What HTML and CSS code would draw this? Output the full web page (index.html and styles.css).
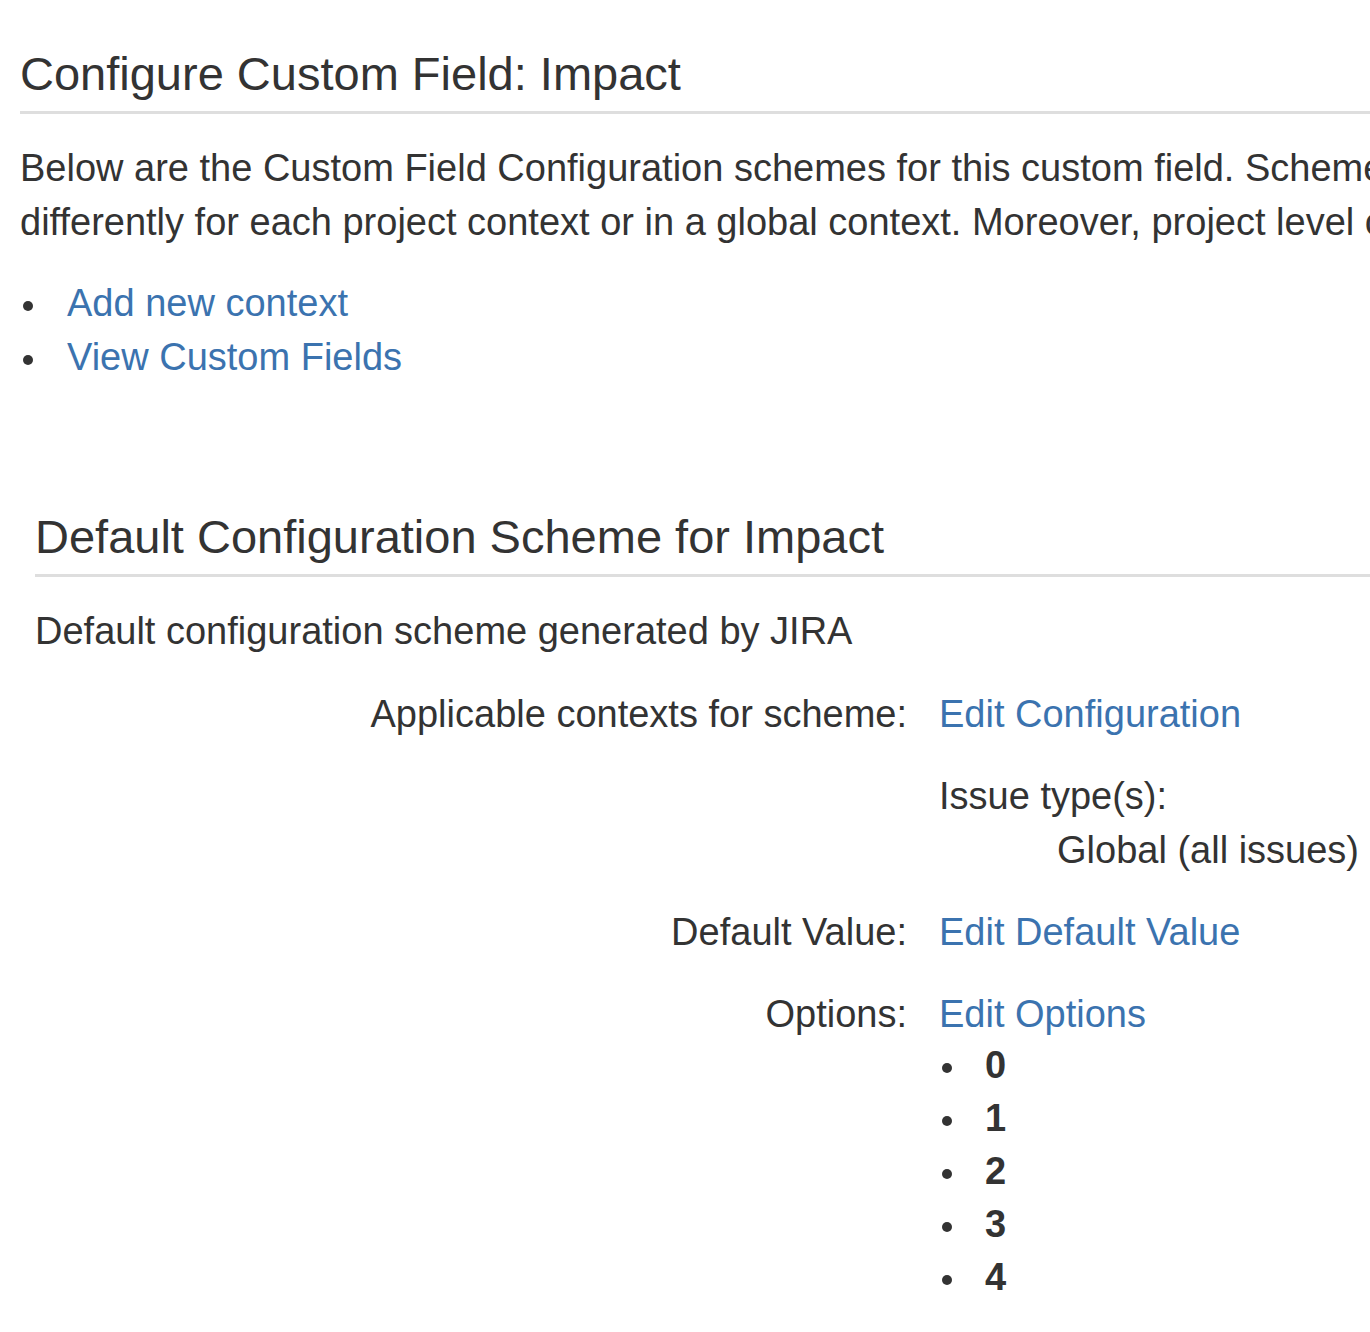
FILE: index.html
```html
<!DOCTYPE html>
<html lang="en">
<head>
<meta charset="utf-8">
<title>Configure Custom Field: Impact</title>
<link rel="stylesheet" href="styles.css">
</head>
<body>
<div class="page">
  <h1 class="page-title">Configure Custom Field: Impact</h1>
  <p class="intro">Below are the Custom Field Configuration schemes for this custom field. Schemes can be configured differently for each project context or in a global context. Moreover, project level contexts override.</p>
  <ul class="actions">
    <li><a href="#">Add new context</a></li>
    <li><a href="#">View Custom Fields</a></li>
  </ul>

  <section class="scheme">
    <h2 class="scheme-title">Default Configuration Scheme for Impact</h2>
    <p class="scheme-desc">Default configuration scheme generated by JIRA</p>
    <dl class="scheme-grid">
      <dt>Applicable contexts for scheme:</dt>
      <dd>
        <a href="#">Edit Configuration</a>
        <div class="context">
          <div>Issue type(s):</div>
          <div class="context-value">Global (all issues)</div>
        </div>
      </dd>
      <dt>Default Value:</dt>
      <dd><a href="#">Edit Default Value</a></dd>
      <dt>Options:</dt>
      <dd>
        <a href="#">Edit Options</a>
        <ul class="options">
          <li><strong>0</strong></li>
          <li><strong>1</strong></li>
          <li><strong>2</strong></li>
          <li><strong>3</strong></li>
          <li><strong>4</strong></li>
        </ul>
      </dd>
    </dl>
  </section>
</div>
</body>
</html>
```

FILE: styles.css
```css
html, body {
  margin: 0;
  padding: 0;
  overflow: hidden;
  background: #fff;
}

body {
  font-family: "Liberation Sans", Arial, Helvetica, sans-serif;
  font-size: 38px;
  line-height: 54px;
  color: #333;
}

a {
  color: #3b73af;
  text-decoration: none;
}

.page {
  width: 2000px;
  padding-left: 20px;
}

.page-title,
.scheme-title {
  margin: 0;
  font-size: 47px;
  font-weight: normal;
  line-height: 56px;
  color: #333;
  padding-bottom: 9px;
  border-bottom: 3px solid #dedede;
}

.page-title {
  padding-top: 46px;
}

.intro {
  width: 1790px;
  margin: 27px 0 0;
}

.actions {
  list-style: none;
  margin: 27px 0 0;
  padding: 0;
}

.actions li,
.options li {
  display: flex;
  align-items: flex-start;
}

.actions li::before,
.options li::before {
  content: "";
  flex: none;
  width: 10px;
  height: 10px;
  border-radius: 50%;
  background: #333;
}

.actions li::before {
  margin: 25px 34px 0 3px;
}

.scheme {
  margin-top: 125px;
  padding-left: 15px;
}

.scheme-desc {
  margin: 27px 0 0;
}

.scheme-grid {
  display: grid;
  grid-template-columns: 872px 1fr;
  column-gap: 32px;
  row-gap: 28px;
  margin: 29px 0 0;
}

.scheme-grid dt {
  text-align: right;
}

.scheme-grid dd {
  margin: 0;
}

.context {
  margin-top: 28px;
}

.context-value {
  padding-left: 118px;
}

.options {
  list-style: none;
  margin: -2px 0 0;
  padding: 0;
  line-height: 53px;
}

.options li::before {
  margin: 24px 33px 0 3px;
}

.options strong {
  font-weight: bold;
}
```
